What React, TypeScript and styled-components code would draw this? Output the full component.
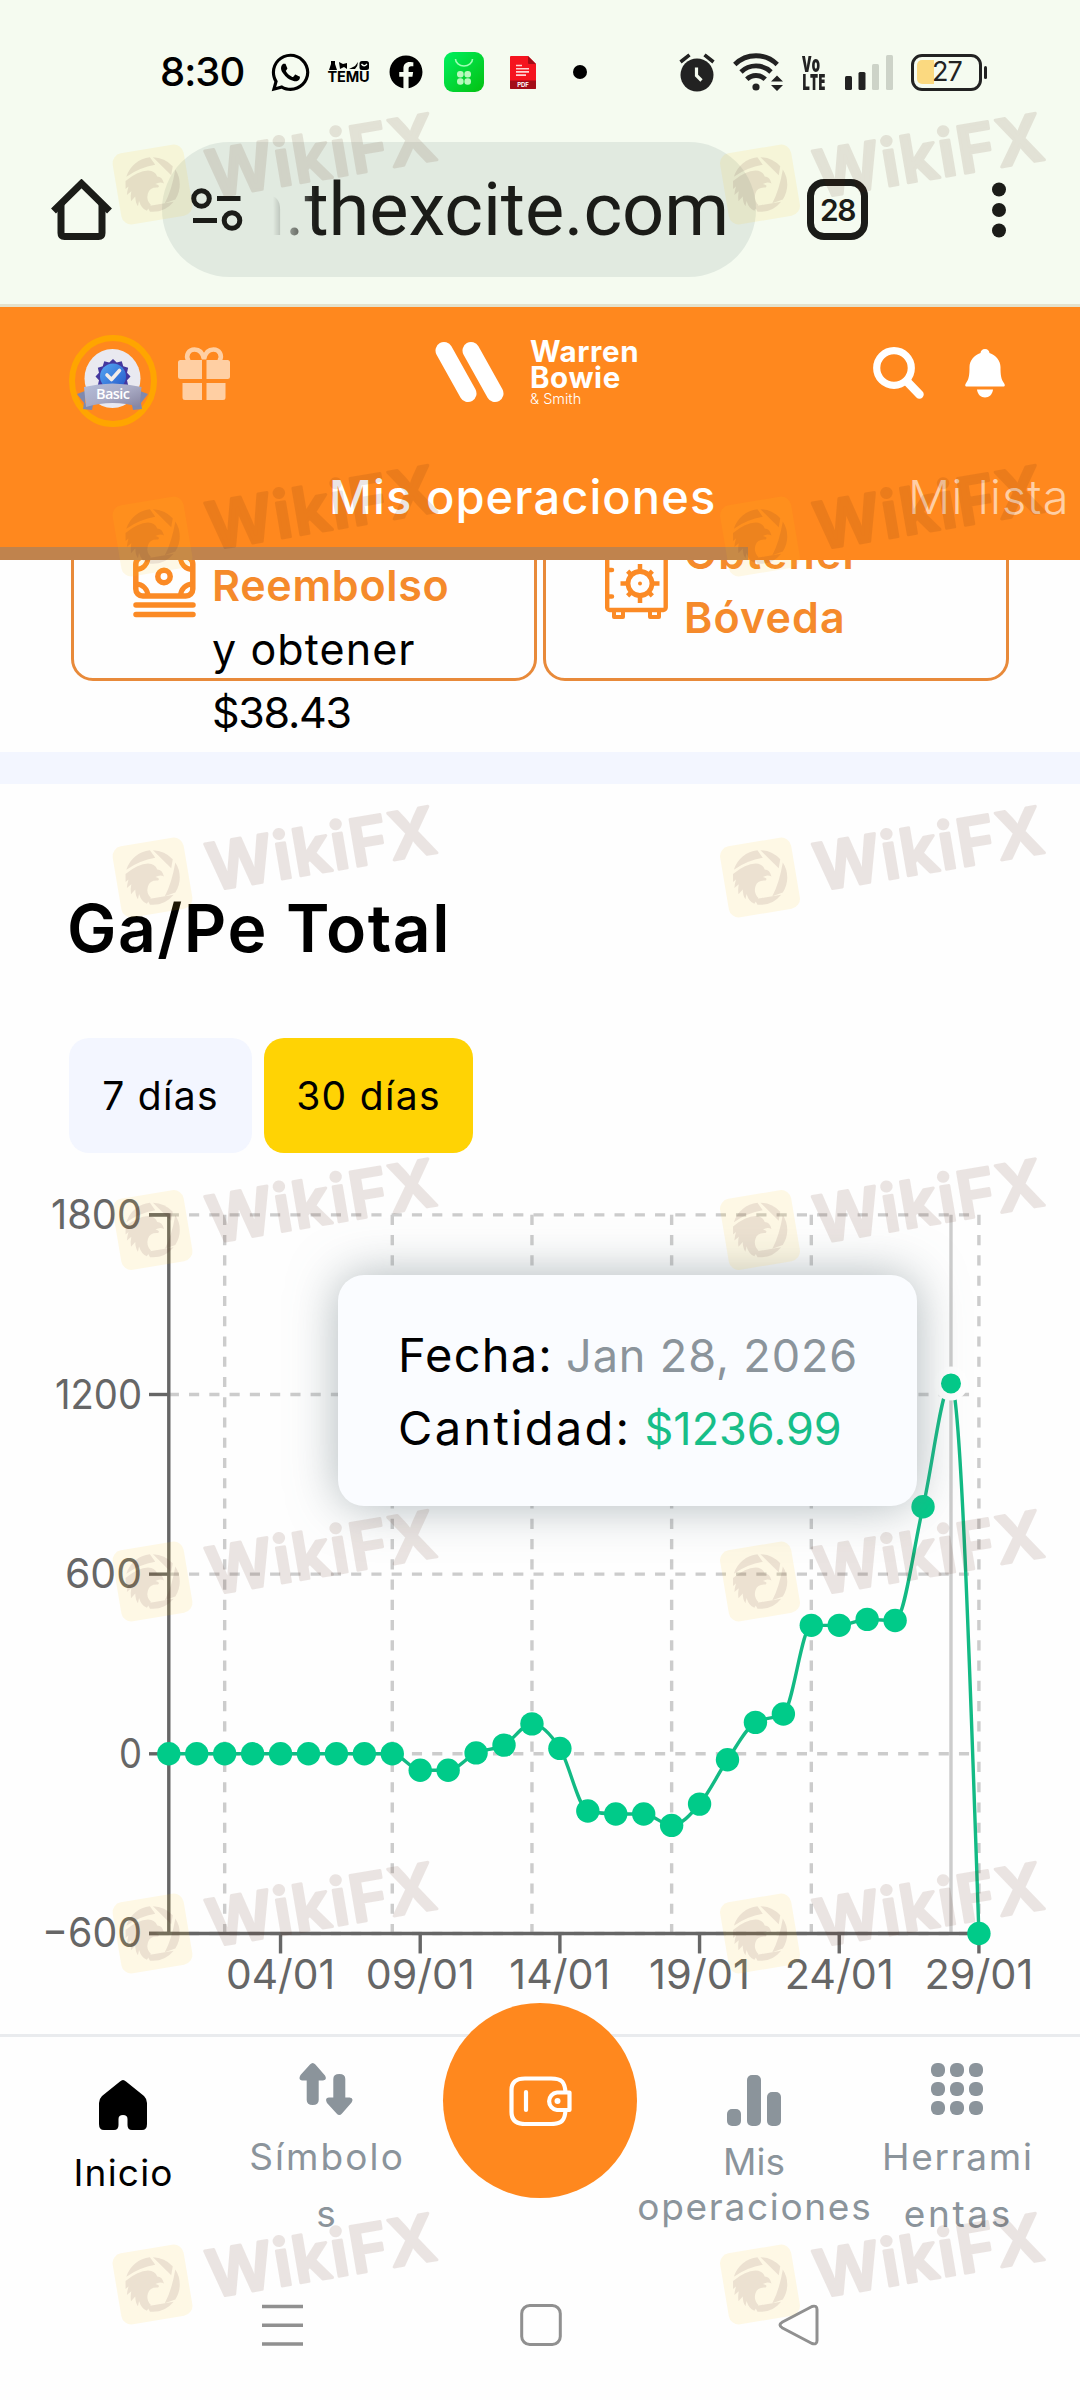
import React from "react";
import styled, { createGlobalStyle } from "styled-components";
import { FaWhatsapp, FaFacebook } from "react-icons/fa";

const ORANGE = "#ff881e";
const GREEN = "#00cb89";
const MUTED = "#8b949b";

const Global = createGlobalStyle`
  * { box-sizing: border-box; }
  body { margin: 0; background: #fff; }
  svg { display: block; flex: none; }
`;

const Page = styled.div`
  position: relative;
  width: 1080px;
  height: 2400px;
  overflow: hidden;
  display: flex;
  flex-direction: column;
  background: #fefefe;
  color: #000;
  font-family: Inter, "Noto Sans", sans-serif;
`;

/* ---------- system status bar ---------- */

const StatusBar = styled.div`
  height: 142px;
  background: #f5fbf0;
  display: flex;
  align-items: flex-start;
  justify-content: space-between;
  padding: 48px 92px 0 160px;
`;

const StatusGroup = styled.div<{ $gap: number }>`
  display: flex;
  align-items: center;
  height: 48px;
  gap: ${(p) => p.$gap}px;
`;

const Clock = styled.span`
  width: 89px;
  font-size: 40px;
  font-weight: 500;
  letter-spacing: -1px;
  line-height: 48px;
`;

const Temu = styled.div`
  width: 41px;
  margin-left: -4px;
  display: flex;
  flex-direction: column;
  align-items: center;
`;

const TemuWord = styled.span`
  font-size: 14.5px;
  font-weight: 700;
  line-height: 14px;
  letter-spacing: -0.2px;
`;

const AppIcon = styled.div<{ $left: number }>`
  margin-left: ${(p) => p.$left}px;
`;

const MoreDot = styled.span`
  width: 14px;
  height: 14px;
  border-radius: 50%;
  background: #000;
  margin-left: 17px;
`;

const VoLte = styled.div`
  width: 25px;
  font: 800 22px/18px "Open Sans", sans-serif;
  color: #222;
  transform: scaleX(0.62);
  transform-origin: left center;
  display: flex;
  flex-direction: column;
`;

const Battery = styled.div`
  position: relative;
  width: 71px;
  height: 37px;
  border: 3px solid #222;
  border-radius: 11px;
  display: flex;
  align-items: center;
  padding: 0 3px;
  margin-right: 6px;
  &::after {
    content: "";
    position: absolute;
    right: -8px;
    top: 9px;
    width: 3px;
    height: 13px;
    border-radius: 2px;
    background: #222;
  }
`;

const BatteryFill = styled.span`
  width: 17px;
  height: 24px;
  border-radius: 5px 0 0 5px;
  background: #fbd980;
`;

const BatteryText = styled.span`
  margin-left: -2px;
  font-size: 27px;
  line-height: 30px;
  letter-spacing: -1px;
  color: #222;
`;

/* ---------- browser toolbar ---------- */

const BrowserBar = styled.div`
  height: 165px;
  background: #f5fbf0;
  border-bottom: 3px solid #e4e2cd;
  display: flex;
  align-items: flex-start;
  padding-left: 51px;
`;

const BarIcon = styled.div<{ $left?: number }>`
  height: 135px;
  display: flex;
  align-items: center;
  margin-left: ${(p) => p.$left ?? 0}px;
`;

const UrlPill = styled.div`
  width: 594px;
  height: 135px;
  margin-left: 50px;
  border-radius: 68px;
  background: #e1eae0;
  display: flex;
  align-items: center;
  padding-left: 29px;
`;

const UrlText = styled.div`
  width: 456px;
  margin-left: 30px;
  overflow: hidden;
  display: flex;
  justify-content: flex-end;
  white-space: nowrap;
  font: 400 74px/100px Roboto, sans-serif;
  letter-spacing: -0.1px;
  color: #1b1c18;
  mask-image: linear-gradient(90deg, transparent 0, #000 42px);
`;

const TabCount = styled.div`
  width: 61px;
  height: 61px;
  margin: 37px 0 0 51px;
  border: 7px solid #1b1c18;
  border-radius: 17px;
  display: flex;
  align-items: center;
  justify-content: center;
  font: 600 30px/40px Inter, sans-serif;
  letter-spacing: -1.5px;
  color: #1b1c18;
`;

/* ---------- site header ---------- */

const Header = styled.header`
  height: 253px;
  background: ${ORANGE};
  display: flex;
  flex-direction: column;
`;

const HeaderTop = styled.div`
  height: 146px;
  display: flex;
  align-items: flex-start;
  padding: 28px 75px 0 69px;
`;

const HeaderIcon = styled.div<{ $left: number; $top: number }>`
  margin: ${(p) => p.$top}px 0 0 ${(p) => p.$left}px;
`;

const BrandWord = styled.div`
  margin: 4px 0 0 26px;
  width: 112px;
  display: flex;
  flex-direction: column;
  color: #fff;
  font-weight: 700;
`;

const BrandLine = styled.span`
  font-size: 29.5px;
  line-height: 25.5px;
  letter-spacing: 0.6px;
`;

const BrandSmall = styled.span`
  margin-top: 1px;
  font-size: 14.5px;
  line-height: 16px;
  font-weight: 300;
`;

const TabsRow = styled.nav`
  height: 94px;
  display: flex;
  align-items: flex-start;
  padding-left: 329px;
  white-space: nowrap;
`;

const Tab = styled.span<{ $active?: boolean; $w: number }>`
  width: ${(p) => p.$w}px;
  font-size: 47px;
  line-height: 60px;
  padding-top: 14px;
  letter-spacing: 1.1px;
  font-weight: ${(p) => (p.$active ? 500 : 300)};
  color: ${(p) => (p.$active ? "#fff" : "#ffcfa5")};
`;

const ScrollTrack = styled.div`
  width: 748px;
  height: 13px;
  background: #c0834d;
`;

/* ---------- content ---------- */

const Content = styled.main`
  height: 1474px;
  overflow: hidden;
  background: #fefefe;
`;

const CardRow = styled.div`
  display: flex;
  gap: 6px;
  margin: -60px 71px 0;
  height: 252px;
`;

const Card = styled.div`
  width: 466px;
  height: 181px;
  border: 3px solid #e88a3a;
  border-radius: 22px;
  display: flex;
  gap: 16px;
  padding-left: 59px;
`;

const CardIcon = styled.div<{ $top: number }>`
  margin-top: ${(p) => p.$top}px;
`;

const CardText = styled.div<{ $top: number }>`
  margin-top: ${(p) => p.$top}px;
  display: flex;
  flex-direction: column;
  font-size: 43px;
  line-height: 63.5px;
  white-space: nowrap;
`;

const CardTitle = styled.span<{ $spacing: number }>`
  color: #f58a2b;
  font-weight: 600;
  letter-spacing: ${(p) => p.$spacing}px;
`;

const CardLine = styled.span<{ $spacing: number }>`
  letter-spacing: ${(p) => p.$spacing}px;
`;

const Band = styled.div`
  height: 32px;
  background: #f3f6ff;
`;

const Title = styled.h2`
  margin: 0;
  padding: 94px 0 0 67px;
  height: 254px;
  font-size: 66px;
  line-height: 100px;
  font-weight: 600;
  letter-spacing: 1.5px;
`;

const RangeRow = styled.div`
  display: flex;
  gap: 12px;
  padding-left: 69px;
  height: 132px;
`;

const RangeButton = styled.button<{ $active?: boolean }>`
  border: 0;
  height: 115px;
  width: ${(p) => (p.$active ? 209 : 183)}px;
  border-radius: 20px;
  background: ${(p) => (p.$active ? "#ffd304" : "#f3f6ff")};
  font: 400 39px/50px Inter, sans-serif;
  letter-spacing: 1.3px;
  color: #000;
  padding: 0;
`;

const ChartWrap = styled.div`
  position: relative;
  height: 864px;
`;

const ChartSvg = styled.svg`
  font-family: Inter, sans-serif;
  font-size: 41px;
  fill: #666;
`;

const Tooltip = styled.div`
  position: absolute;
  left: 338px;
  top: 105px;
  width: 579px;
  height: 231px;
  border-radius: 26px;
  background: #fafcff;
  box-shadow: 0 0 48px rgba(110, 125, 132, 0.55);
  padding: 44px 0 0 60px;
  white-space: nowrap;
`;

const TipLine = styled.div`
  display: flex;
  align-items: baseline;
  gap: 13px;
  font-size: 45px;
  line-height: 72px;
`;

const TipLabel = styled.span<{ $spacing: number }>`
  font-size: 47px;
  letter-spacing: ${(p) => p.$spacing}px;
`;

const TipValue = styled.span<{ $color: string; $spacing: number }>`
  color: ${(p) => p.$color};
  letter-spacing: ${(p) => p.$spacing}px;
`;

/* ---------- bottom navigation ---------- */

const BottomNav = styled.nav`
  position: relative;
  height: 218px;
  border-top: 3px solid #e9ebee;
  background: #fefefe;
  display: flex;
  padding-left: 25px;
`;

const NavItem = styled.div<{ $w: number; $top: number; $active?: boolean }>`
  width: ${(p) => p.$w}px;
  padding-top: ${(p) => p.$top}px;
  display: flex;
  flex-direction: column;
  align-items: center;
  color: ${(p) => (p.$active ? "#000" : MUTED)};
`;

const NavLabel = styled.span<{ $lh: number; $top?: number; $spacing: number }>`
  margin-top: ${(p) => p.$top ?? 0}px;
  font-size: 37px;
  line-height: ${(p) => p.$lh}px;
  letter-spacing: ${(p) => p.$spacing}px;
  padding-left: ${(p) => p.$spacing}px;
  white-space: nowrap;
`;

const WalletButton = styled.div`
  position: absolute;
  left: 443px;
  top: -34px;
  width: 194px;
  height: 195px;
  border-radius: 50%;
  background: ${ORANGE};
  display: flex;
  align-items: center;
  justify-content: center;
`;

const SystemNav = styled.div`
  height: 148px;
  background: #fefefe;
  display: flex;
  justify-content: space-between;
  align-items: flex-start;
  padding: 52px 260px 0 261px;
`;

const Overlay = styled.div`
  position: absolute;
  inset: 0;
  pointer-events: none;
`;

/* ---------- chart data ---------- */

const levels = [
  0, 0, 0, 0, 0, 0, 0, 0, 0, -55, -55, 3, 29, 100, 18, -191, -201, -201, -239, -168, -20, 105, 133,
  429, 429, 449, 445, 825, 1236.99, -600,
];
const TOP = 1170;
const px = (i: number) => 168.8 + i * 27.935;
const py = (v: number) => 1753.8 - TOP - (v * 179.65) / 600;

function monotonePath(pts: [number, number][]) {
  const n = pts.length;
  const slope: number[] = [];
  for (let i = 0; i < n - 1; i++) {
    slope.push((pts[i + 1][1] - pts[i][1]) / (pts[i + 1][0] - pts[i][0]));
  }
  const t = pts.map((_, i) => {
    if (i === 0 || i === n - 1) return 0;
    const a = slope[i - 1];
    const b = slope[i];
    if (a * b <= 0) return 0;
    return Math.sign(a) * Math.min(Math.abs(a), Math.abs(b), 0.5 * Math.abs((a + b) / 2)) * 2;
  });
  t[0] = (3 * slope[0] - t[1]) / 2;
  t[n - 1] = (3 * slope[n - 2] - t[n - 2]) / 2;
  let d = `M${pts[0][0]},${pts[0][1]}`;
  for (let i = 0; i < n - 1; i++) {
    const h = (pts[i + 1][0] - pts[i][0]) / 3;
    d += `C${pts[i][0] + h},${pts[i][1] + h * t[i]} ${pts[i + 1][0] - h},${
      pts[i + 1][1] - h * t[i + 1]
    } ${pts[i + 1][0]},${pts[i + 1][1]}`;
  }
  return d;
}

const yTicks = [
  { v: 1800, label: "1800", w: 91 },
  { v: 1200, label: "1200", w: 87 },
  { v: 600, label: "600", w: 77 },
  { v: 0, label: "0", w: 23 },
  { v: -600, label: "−600", w: 100 },
];
const xTicks = [
  { i: 4, label: "04/01", w: 109 },
  { i: 9, label: "09/01", w: 109 },
  { i: 14, label: "14/01", w: 101 },
  { i: 19, label: "19/01", w: 101 },
  { i: 24, label: "24/01", w: 109 },
  { i: 29, label: "29/01", w: 109 },
];

function Chart() {
  const pts = levels.map((v, i) => [px(i), py(v)] as [number, number]);
  const active = 28;
  return (
    <ChartSvg width="1080" height="864">
      <g stroke="#ccc" strokeWidth="3.4" strokeDasharray="10.13 10.13">
        {yTicks.map((t) => (
          <line key={t.v} x1={px(0)} x2={px(29)} y1={py(t.v)} y2={py(t.v)} />
        ))}
        {[2, 8, 13, 18, 23, 29].map((i) => (
          <line key={i} x1={px(i)} x2={px(i)} y1={py(1800)} y2={py(-600)} />
        ))}
      </g>
      <line x1={px(active)} x2={px(active)} y1={py(1800)} y2={py(-600)} stroke="#ccc" strokeWidth="3.4" />
      <g stroke="#666" strokeWidth="3.4">
        <path d={`M149,${py(1800)}H${px(0)}V${py(-600)}M149,${py(-600)}H${px(29)}`} fill="none" />
        {yTicks.map((t) => (
          <line key={t.v} x1="149" x2={px(0)} y1={py(t.v)} y2={py(t.v)} />
        ))}
        {xTicks.map((t) => (
          <line key={t.i} x1={px(t.i)} x2={px(t.i)} y1={py(-600)} y2={py(-600) + 20} />
        ))}
      </g>
      {yTicks.map((t) => (
        <text key={t.v} x={142 - t.w} y={py(t.v) + 14} textLength={t.w} lengthAdjust="spacingAndGlyphs">
          {t.label}
        </text>
      ))}
      {xTicks.map((t) => (
        <text key={t.i} x={px(t.i) - t.w / 2} y={1989 - TOP} textLength={t.w} lengthAdjust="spacingAndGlyphs">
          {t.label}
        </text>
      ))}
      <path d={monotonePath(pts)} fill="none" stroke="#12ba84" strokeWidth="3.4" />
      {pts.map(([x, y], i) =>
        i === active ? (
          <circle key={i} cx={x} cy={y} r="13.5" fill={GREEN} stroke="#fff" strokeWidth="7" />
        ) : (
          <circle key={i} cx={x} cy={y} r="11.7" fill={GREEN} />
        )
      )}
    </ChartSvg>
  );
}

/* ---------- icons ---------- */

const TemuMarks = () => (
  <svg width="40" height="9" viewBox="0 0 40 9">
    <path d="M2 0h4v3l2 6H0l2-6zM10 1l4 2 4-1v6l-3-2-4 2zM20 8h6q3-3 3-7l-3 4z" fill="#000" />
    <rect x="30.500" y="0" width="9.500" height="9" rx="2.500" />
    <path d="M32.500 3q2.500 3.500 5.500 0" stroke="#f5fbf0" strokeWidth="1.300" fill="none" />
  </svg>
);

const Clover = () => (
  <svg width="40" height="40" viewBox="0 0 40 40">
    <defs>
      <linearGradient id="clover" x1="0" y1="0" x2="1" y2="1">
        <stop offset="0" stopColor="#00f060" />
        <stop offset="1" stopColor="#04c010" />
      </linearGradient>
    </defs>
    <rect width="40" height="40" rx="9" fill="url(#clover)" />
    <path d="M11.500 7a8.500 7 0 0 0 17 0" stroke="#9dffb4" strokeWidth="1.600" fill="none" />
    <g fill="#b8f8bd">
      <rect x="13" y="19" width="6.600" height="6.600" rx="3" />
      <rect x="20.400" y="19" width="6.600" height="6.600" rx="3" />
      <rect x="13" y="26.200" width="6.600" height="6.600" rx="3" />
      <rect x="20.400" y="26.200" width="6.600" height="6.600" rx="3" />
    </g>
  </svg>
);

const Pdf = () => (
  <svg width="26" height="33" viewBox="0 0 26 33">
    <path d="M1 0h17l8 8v24q0 1-1 1H1q-1 0-1-1V1q0-1 1-1z" fill="#f5141f" />
    <path d="M18 0l8 8h-7q-1 0-1-1z" fill="#a30d18" />
    <path d="M0 24.500h26V32q0 1-1 1H1q-1 0-1-1z" fill="#a30d18" />
    <path d="M6 9.500h6M6 12.700h13M6 15.900h13M6 19.100h10" stroke="#ffd5d5" strokeWidth="1.600" />
    <text x="13" y="30.800" textAnchor="middle" fontFamily="Inter" fontWeight="700" fontSize="6" fill="#fff">PDF</text>
  </svg>
);

const Alarm = () => (
  <svg width="36" height="39" viewBox="0 0 36 39">
    <circle cx="18" cy="22" r="16.500" fill="#222" />
    <path d="M1.500 9L10.500 1.800M34.500 9L25.500 1.800" stroke="#222" strokeWidth="3.600" />
    <path d="M17.500 14.500v8l5 5" stroke="#f5fbf0" strokeWidth="3.200" fill="none" />
  </svg>
);

const Wifi = () => (
  <svg width="51" height="40" viewBox="0 0 51 40">
    <g fill="none" stroke="#222" strokeWidth="4.800">
      <path d="M1.800 12.500a30 30 0 0 1 42.400 0" />
      <path d="M8 20a21.500 21.500 0 0 1 30 0" />
      <path d="M13.800 27.300a13 13 0 0 1 18.400 0" />
    </g>
    <circle cx="23" cy="35" r="3.600" fill="#222" />
    <path d="M38 29.500l6-6 6 6zM38 33l6 6 6-6z" fill="#222" />
  </svg>
);

const Signal = () => (
  <svg width="48" height="35" viewBox="0 0 48 35">
    <rect x="0" y="21" width="7" height="14" rx="1.500" fill="#222" />
    <rect x="13.500" y="17" width="7" height="18" rx="1.500" fill="#222" />
    <rect x="27" y="9" width="7" height="26" rx="1.500" fill="#cdd3c8" />
    <rect x="41" y="0" width="7" height="35" rx="1.500" fill="#cdd3c8" />
  </svg>
);

const HomeOutline = () => (
  <svg width="61" height="61" viewBox="0 0 61 61" fill="none" stroke="#1b1c18" strokeWidth="7">
    <path d="M2.500 32L30.500 4.500L58.500 32" strokeLinecap="butt" />
    <path d="M10 24V54q0 3.500 3.500 3.500h34q3.500 0 3.500-3.500V24" />
  </svg>
);

const Tune = () => (
  <svg width="52" height="43" viewBox="0 0 52 43" fill="none" stroke="#1b1c18" strokeWidth="5">
    <circle cx="10.500" cy="10.500" r="7.800" />
    <circle cx="41" cy="32.500" r="7.800" />
    <path d="M26 10.500h23.500M2 32.500h24" />
  </svg>
);

const Kebab = () => (
  <svg width="16" height="56" viewBox="0 0 16 56" fill="#1b1c18">
    <circle cx="8" cy="7.500" r="7" />
    <circle cx="8" cy="28" r="7" />
    <circle cx="8" cy="48.500" r="7" />
  </svg>
);

const star = Array.from({ length: 24 }, (_, i) => {
  const r = i % 2 ? 14.5 : 17.5;
  const a = (i * Math.PI) / 12 - Math.PI / 2;
  return `${44 + r * Math.cos(a)},${41.5 + r * Math.sin(a)}`;
}).join(" ");

const Medal = () => (
  <svg width="88" height="92" viewBox="0 0 88 92">
    <defs>
      <linearGradient id="blue" x1="0" y1="0" x2="1" y2="1">
        <stop offset="0" stopColor="#55a8f4" />
        <stop offset="1" stopColor="#2456c8" />
      </linearGradient>
      <linearGradient id="ribbon" x1="0" y1="0" x2="1" y2="1">
        <stop offset="0" stopColor="#b4bdda" />
        <stop offset="0.500" stopColor="#a9abc5" />
        <stop offset="1" stopColor="#85839f" />
      </linearGradient>
    </defs>
    <ellipse cx="44" cy="46" rx="41" ry="43" fill="none" stroke="#ffa500" strokeWidth="6" />
    <ellipse cx="43.500" cy="43.500" rx="28" ry="29.500" fill="#e9e9f0" />
    <polygon points={star} fill="#43379f" />
    <circle cx="44" cy="41.500" r="13" fill="url(#blue)" />
    <path d="M38 40l4.500 4.500 8-9" stroke="#f3ece8" strokeWidth="3.600" fill="none" strokeLinecap="round" strokeLinejoin="round" />
    <path d="M8 59l8-3v12l8 2-1 5-9-1 1-6zM79 59l-8-3v12l-8 2 1 5 9-1-1-6z" fill="#8089ad" />
    <path d="M15 52q28.500-7 57.500 0l-2 20q-27-8-53.500 0z" fill="url(#ribbon)" />
    <text x="27" y="63.500" fontFamily="Open Sans" fontWeight="600" fontSize="14.500" textLength="34" fill="#fff">Basic</text>
  </svg>
);

const Gift = () => (
  <svg width="52" height="53" viewBox="0 0 52 53">
    <g fill="#ffcfa3">
      <path d="M2.500 13H24v19H2.500Q0 32 0 29.500v-14Q0 13 2.500 13zM28.500 13h21q2.500 0 2.500 2.500v14q0 2.500-2.500 2.500h-21z" />
      <path d="M4.500 36H24v17H7q-2.500 0-2.500-2.500zM28.500 36H47.500v14.500q0 2.500-2.500 2.500H28.500z" />
    </g>
    <path d="M10.500 14C7 8 11 2.500 16.500 2.500C22 2.500 25 7 26 12C27 7 30 2.500 35.500 2.500C41 2.500 45 8 41.500 14" fill="none" stroke="#ffcfa3" strokeWidth="4.600" />
  </svg>
);

const BrandMark = () => (
  <svg width="69" height="62" viewBox="0 0 69 62" stroke="#fff" strokeWidth="17" strokeLinecap="round">
    <path d="M9 9.500L33 52.500M36 9.500L60 52.500" />
  </svg>
);

const Search = () => (
  <svg width="52" height="52" viewBox="0 0 52 52" fill="none" stroke="#fff">
    <circle cx="21" cy="21" r="17.300" strokeWidth="7.200" />
    <path d="M34 34.500L46.500 47.500" strokeWidth="8.500" strokeLinecap="round" />
  </svg>
);

const Bell = () => (
  <svg width="40" height="49" viewBox="0 0 40 49" fill="#fff">
    <path d="M20 0c2.800 0 4.300 2 4.500 4C31 6 35.500 12 35.500 18c0 8 .5 12 3.700 16.500c1.200 2 .5 3-1 3H1.800c-1.500 0-2.200-1-1-3C4 30 4.500 26 4.500 18C4.500 12 9 6 15.500 4C15.700 2 17.200 0 20 0z" />
    <path d="M12 40.500h16c-.5 5-4 8-8 8s-7.500-3-8-8z" />
  </svg>
);

const Cash = () => (
  <svg width="63" height="75" viewBox="0 0 63 75" fill="none" stroke="#fb8a25" strokeWidth="5.500">
    <rect x="2.800" y="14" width="57" height="39" rx="7" />
    <circle cx="31" cy="33.500" r="6.200" />
    <g strokeWidth="5">
      <path d="M2.800 26.500A12 12 0 0 0 15 14M59.800 26.500A12 12 0 0 1 47.500 14" />
      <path d="M2.800 41A12 12 0 0 1 15 53M59.800 41A12 12 0 0 0 47.500 53" />
    </g>
    <path d="M3 62h57M3 71.500h57" strokeLinecap="round" />
  </svg>
);

const Vault = () => (
  <svg width="63" height="80" viewBox="0 0 63 80" fill="none" stroke="#fb8a25">
    <rect x="2.200" y="2" width="58.500" height="69" rx="2.500" strokeWidth="4.400" />
    <circle cx="35" cy="44.500" r="12" strokeWidth="4.800" />
    <circle cx="35" cy="44.500" r="2" fill="#fb8a25" stroke="none" />
    <g strokeWidth="4.500">
      {[0, 45, 90, 135, 180, 225, 270, 315].map((a) => (
        <path key={a} d={a % 90 ? "M35 32v-5" : "M35 32v-7"} transform={`rotate(${a} 35 44.500)`} />
      ))}
    </g>
    <path d="M4 31h3M4 57.500h3" strokeWidth="4.500" strokeLinecap="round" />
    <path d="M9 73v5h9v-5M45 73v5h9v-5" strokeWidth="4" strokeLinejoin="round" />
  </svg>
);

const HomeSolid = () => (
  <svg width="48" height="50" viewBox="0 0 48 50">
    <path d="M21 1.500q3-3 6 0L45 16q3 3 3 7v21q0 6-5 6H33q-4.500 0-4.500-5v-6q0-4-4.500-4t-4.500 4v6q0 5-4.500 5H5q-5 0-5-6V23q0-4 3-7z" />
  </svg>
);

const Arrows = () => (
  <svg width="54" height="52" viewBox="0 0 54 52" fill={MUTED}>
    <path d="M11 1.500q2.700-3 5.400 0l9.600 11q2.500 4.500-2 5h-4.300V37q0 5-6 5t-6-5V17.500H3.400Q-1.200 17 1.500 12z" />
    <path d="M37.600 50.500q2.700 3 5.400 0l9.600-11q2.500-4.500-2-5h-4.300V16q0-5-6-5t-6 5v18.500H30q-4.600.5-2 5.500z" />
  </svg>
);

const Bars = () => (
  <svg width="54" height="51" viewBox="0 0 54 51" fill={MUTED}>
    <rect x="0" y="34" width="14" height="17" rx="5" />
    <rect x="20" y="0" width="14" height="51" rx="5" />
    <rect x="40" y="17" width="14" height="34" rx="5" />
  </svg>
);

const Grid = () => (
  <svg width="52" height="52" viewBox="0 0 52 52" fill={MUTED}>
    {[0, 19, 38].map((y) => [0, 19, 38].map((x) => <rect key={`${x}-${y}`} x={x} y={y} width="14" height="14" rx="6" />))}
  </svg>
);

const Wallet = () => (
  <svg width="63" height="50" viewBox="0 0 63 50" fill="none" stroke="#fff" strokeWidth="4.200">
    <path d="M56.500 17C56 6 53 2.500 42 2.500H16Q2.500 2.500 2.500 14v22Q2.500 48 16 48H42C53 48 56 44 56.500 34" />
    <path d="M60.500 16.500H48a8.800 8.800 0 0 0 0 17.500H60.500z" strokeLinejoin="round" />
    <circle cx="48.500" cy="25" r="3" fill="#fff" stroke="none" />
    <path d="M17 16v18" strokeLinecap="round" />
  </svg>
);

const Recents = () => (
  <svg width="43" height="44" viewBox="0 0 43 44" stroke="#909090" strokeWidth="3.400">
    <path d="M1 2.500h41M1 21.300h41M1 40h41" />
  </svg>
);

const HomeKey = () => (
  <svg width="42" height="42" viewBox="0 0 42 42" fill="none" stroke="#909090" strokeWidth="3">
    <rect x="1.700" y="1.500" width="38.600" height="39" rx="8" />
  </svg>
);

const BackKey = () => (
  <svg width="42" height="42" viewBox="0 0 42 42" fill="none" stroke="#909090" strokeWidth="3">
    <path d="M34 2.500q5-1.500 5 3v31q0 4.500-5 3L4.500 24q-5-3 0-6z" strokeLinejoin="round" />
  </svg>
);

/* ---------- watermark ---------- */

const markRows = [110, 462, 803, 1155.5, 1507, 1859, 2210];

const Watermark = ({ x, y }: { x: number; y: number }) => (
  <g transform={`translate(${x} ${y})`}>
    <g transform="rotate(-9.600 40.500 74.500)">
      <rect x="4.500" y="38.500" width="72" height="72" rx="10" fill="#ffc81e" opacity="0.110" />
      <g opacity="0.100" fill="#551f2b" transform="translate(40.500 74.500)">
        <path d="M-24.500 -12A27.300 27.300 0 0 1 2 -27.200L6 -19Q-10 -19 -24.500 -12z" />
        <path d="M5 -26.800A27.300 27.300 0 0 1 23 -14.500L20 -6z" />
        <path d="M25 -11A27.300 27.300 0 0 1 20 18.500L9 20.500Q18 9 25 -11z" />
        <path d="M18 20.500A27.300 27.300 0 0 1 -7 26.400L-9 20.500z" />
        <path d="M-26 -8Q-12 -16 -2 -14.500Q5 -13 6 -7Q11 -6 11.500 1Q8 -2 3 0Q8 2 5 4Q-3 2 -6 8Q-9 14 -5 20L-10 25Q-15 22 -16 14L-18 19Q-20 15 -19 9L-24 13Q-24 8 -22 3L-27 6Q-26 2 -24 -2L-27.300 0z" />
      </g>
    </g>
    <text
      x="99"
      y="88"
      transform="rotate(-9.600 99 88)"
      fontFamily="Inter"
      fontWeight="600"
      fontSize="65"
      textLength="231"
      fill="#551f0b"
      stroke="#551f0b"
      strokeWidth="3"
      strokeLinejoin="round"
      opacity="0.110"
    >
      WikiFX
    </text>
  </g>
);

export default function App() {
  return (
    <Page>
      <Global />
      <StatusBar>
        <StatusGroup $gap={20}>
          <Clock>8:30</Clock>
          <FaWhatsapp size={43} />
          <Temu>
            <TemuMarks />
            <TemuWord>TEMU</TemuWord>
          </Temu>
          <FaFacebook size={34} />
          <AppIcon $left={1}><Clover /></AppIcon>
          <AppIcon $left={6}><Pdf /></AppIcon>
          <MoreDot />
        </StatusGroup>
        <StatusGroup $gap={18}>
          <Alarm />
          <Wifi />
          <VoLte>
            <span>Vo</span>
            <span>LTE</span>
          </VoLte>
          <Signal />
          <Battery>
            <BatteryFill />
            <BatteryText>27</BatteryText>
          </Battery>
        </StatusGroup>
      </StatusBar>

      <BrowserBar>
        <BarIcon><HomeOutline /></BarIcon>
        <UrlPill>
          <Tune />
          <UrlText>n.thexcite.com</UrlText>
        </UrlPill>
        <TabCount>28</TabCount>
        <BarIcon $left={123}><Kebab /></BarIcon>
      </BrowserBar>

      <Header>
        <HeaderTop>
          <Medal />
          <HeaderIcon $left={21} $top={12}><Gift /></HeaderIcon>
          <HeaderIcon $left={205} $top={6}><BrandMark /></HeaderIcon>
          <BrandWord>
            <BrandLine>Warren</BrandLine>
            <BrandLine>Bowie</BrandLine>
            <BrandSmall>&amp; Smith</BrandSmall>
          </BrandWord>
          <HeaderIcon $left={231} $top={12}><Search /></HeaderIcon>
          <HeaderIcon $left={40} $top={14}><Bell /></HeaderIcon>
        </HeaderTop>
        <TabsRow>
          <Tab $active $w={579}>Mis operaciones</Tab>
          <Tab $w={172}>Mi lista</Tab>
        </TabsRow>
        <ScrollTrack />
      </Header>

      <Content>
        <CardRow>
          <Card>
            <CardIcon $top={40}><Cash /></CardIcon>
            <CardText $top={51}>
              <CardTitle $spacing={0.7}>Reembolso</CardTitle>
              <CardLine $spacing={1.1}>y obtener</CardLine>
              <CardLine $spacing={-1.3}>$38.43</CardLine>
            </CardText>
          </Card>
          <Card>
            <CardIcon $top={36}><Vault /></CardIcon>
            <CardText $top={19}>
              <CardTitle $spacing={1.1}>Obtener</CardTitle>
              <CardTitle $spacing={1.1}>Bóveda</CardTitle>
            </CardText>
          </Card>
        </CardRow>
        <Band />
        <Title>Ga/Pe Total</Title>
        <RangeRow>
          <RangeButton>7 días</RangeButton>
          <RangeButton $active>30 días</RangeButton>
        </RangeRow>
        <ChartWrap>
          <Chart />
          <Tooltip>
            <TipLine>
              <TipLabel $spacing={1.2}>Fecha:</TipLabel>
              <TipValue $color={MUTED} $spacing={0.9}>Jan 28, 2026</TipValue>
            </TipLine>
            <TipLine>
              <TipLabel $spacing={2.3}>Cantidad:</TipLabel>
              <TipValue $color="#17be88" $spacing={0}>$1236.99</TipValue>
            </TipLine>
          </Tooltip>
        </ChartWrap>
      </Content>

      <BottomNav>
        <NavItem $w={196} $top={43} $active>
          <HomeSolid />
          <NavLabel $top={14} $lh={57} $spacing={1.2}>Inicio</NavLabel>
        </NavItem>
        <NavItem $w={210} $top={26}>
          <Arrows />
          <NavLabel $top={13} $lh={57} $spacing={2.1}>Símbolo</NavLabel>
          <NavLabel $lh={57} $spacing={0}>s</NavLabel>
        </NavItem>
        <NavItem $w={206} $top={0} />
        <NavItem $w={234} $top={38}>
          <Bars />
          <NavLabel $top={13} $lh={45} $spacing={0}>Mis</NavLabel>
          <NavLabel $lh={45} $spacing={1.7}>operaciones</NavLabel>
        </NavItem>
        <NavItem $w={172} $top={26}>
          <Grid />
          <NavLabel $top={13} $lh={57} $spacing={1.7}>Herrami</NavLabel>
          <NavLabel $lh={57} $spacing={2.6}>entas</NavLabel>
        </NavItem>
        <WalletButton><Wallet /></WalletButton>
      </BottomNav>

      <SystemNav>
        <Recents />
        <HomeKey />
        <BackKey />
      </SystemNav>

      <Overlay>
        <svg width="1080" height="2400">
          {markRows.map((y) => [112, 719.5].map((x) => <Watermark key={`${x}-${y}`} x={x} y={y} />))}
        </svg>
      </Overlay>
    </Page>
  );
}
